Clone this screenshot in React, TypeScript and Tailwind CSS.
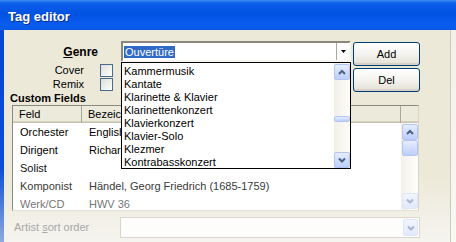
import React from "react";

interface ScrollBtnProps {
  chevron?: "up" | "down";
  faded?: boolean;
  className?: string;
}

const ScrollBtn: React.FC<ScrollBtnProps> = ({ chevron, faded, className = "" }) => (
  <div
    className={`flex items-center justify-center rounded-[2px] border ${
      faded
        ? "border-[#dfe6f6] bg-gradient-to-b from-[#f2f5fd] to-[#e2e9fb]"
        : "border-[#b4c6ef] bg-gradient-to-b from-[#e6edfe] to-[#bccefa]"
    } ${className}`}
  >
    {chevron && (
      <svg width="8" height="6" viewBox="0 0 8 6">
        <polyline
          points={chevron === "up" ? "1,5 4,2 7,5" : "1,1.5 4,4.5 7,1.5"}
          fill="none"
          stroke={faded ? "#a9b5cf" : "#4d6185"}
          strokeWidth="2"
        />
      </svg>
    )}
  </div>
);

const Checkbox: React.FC<{ className?: string }> = ({ className = "" }) => (
  <div
    className={`w-[13px] h-[13px] border border-[#4a6a8e] bg-gradient-to-br from-[#dcdcd7] to-white ${className}`}
  />
);

const XpButton: React.FC<{ label: string }> = ({ label }) => (
  <div className="w-[67px] h-[24px] rounded-[3px] border border-[#003c74] bg-gradient-to-b from-white via-[#f4f3ee] to-[#e3e0d5] shadow-[inset_0_-2px_0_#d8d2c6] flex items-center justify-center text-[11px] text-black">
    {label}
  </div>
);

const genres = [
  "Kammermusik",
  "Kantate",
  "Klarinette & Klavier",
  "Klarinettenkonzert",
  "Klavierkonzert",
  "Klavier-Solo",
  "Klezmer",
  "Kontrabasskonzert",
];

// the first two values run under the open genre list, so they are cut at its edge
const fields = [
  { name: "Orchester", value: "English Chamber Orchestra", color: "text-black", cut: true },
  { name: "Dirigent", value: "Richard Bonynge", color: "text-black", cut: true },
  { name: "Solist", value: "", color: "text-[#111]", cut: false },
  { name: "Komponist", value: "Händel, Georg Friedrich (1685-1759)", color: "text-[#3a3a3a]", cut: false },
  { name: "Werk/CD", value: "HWV 36", color: "text-[#767676]", cut: false },
];

const App: React.FC = () => {
  return (
    <div className="w-[456px] h-[242px] overflow-hidden flex flex-col bg-[#ece9d8] font-['Liberation_Sans',Arial,sans-serif] text-[11px] text-black">
      {/* title bar */}
      <div className="h-[30px] shrink-0 flex items-center pl-[8px] pt-[3px] bg-[linear-gradient(to_bottom,#3f8ef6_0px,#0d60ea_3px,#0053e2_45%,#0a5def_85%,#0a57e4_100%)]">
        <span className="text-[13px] font-bold text-white [text-shadow:1px_1px_0_#0b2f8f]">
          Tag editor
        </span>
      </div>

      <div className="flex flex-1 min-h-0">
        <div className="w-[4px] bg-[linear-gradient(to_bottom,#0646d2_0%,#0a4fd6_65%,#8fa9df_100%)]" />

        <div className="flex-1 flex flex-col bg-[linear-gradient(to_bottom,#ece9d8_0%,#ece9d8_68%,#f5f4ef_100%)]">
          {/* genre / flags / buttons */}
          <div className="mt-[11px] h-[50px] shrink-0 flex items-start">
            <div className="w-[117px] flex flex-col">
              <div className="h-[21px] flex items-center justify-end pr-[23px] text-[12px] font-bold">
                <span>
                  <span className="underline">G</span>enre
                </span>
              </div>
              <div className="mt-[2px] h-[13px] flex items-center justify-end pr-[8px]">
                <span>Cover</span>
                <Checkbox className="ml-[16px]" />
              </div>
              <div className="mt-[1px] h-[13px] flex items-center justify-end pr-[8px]">
                <span>Remix</span>
                <Checkbox className="ml-[16px]" />
              </div>
            </div>

            <div className="relative w-[230px] h-[21px] flex border-2 border-t-[#8a877c] border-l-[#8a877c] border-r-[#f7f6f1] border-b-[#f7f6f1] bg-white">
              <div className="flex-1 flex items-center pl-[1px]">
                <span className="bg-[#316ac5] text-white px-[1px] leading-[12px]">Ouvertüre</span>
              </div>
              <div className="w-[13px] border-l border-[#a9a7a0] flex items-center justify-center">
                <svg width="5" height="3" viewBox="0 0 5 3">
                  <polygon points="0,0 5,0 2.5,3" fill="#000" />
                </svg>
              </div>

              {/* open dropdown */}
              <div className="absolute left-[-2px] top-[19px] z-10 w-[230px] h-[107px] border border-black bg-white flex">
                <div className="flex-1 pt-[2px] pl-[2px] overflow-hidden">
                  {genres.map((g) => (
                    <div key={g} className="h-[13px] leading-[13px] whitespace-nowrap">
                      {g}
                    </div>
                  ))}
                </div>
                <div className="w-[16px] flex flex-col pt-[1px] bg-gradient-to-r from-[#f1efe7] to-[#fdfdfa]">
                  <ScrollBtn chevron="up" className="h-[16px]" />
                  <ScrollBtn className="mt-[36px] h-[6px]" />
                  <div className="flex-1" />
                  <ScrollBtn chevron="down" className="h-[16px]" />
                </div>
              </div>
            </div>

            <div className="ml-[2px] pt-[1px] flex flex-col gap-[2px]">
              <XpButton label="Add" />
              <XpButton label="Del" />
            </div>
          </div>

          {/* custom fields */}
          <div className="h-[14px] shrink-0 pl-[6px] flex items-center font-bold">Custom Fields</div>

          <div className="ml-[8px] w-[407px] h-[106px] shrink-0 flex flex-col overflow-hidden bg-white border border-t-[#8c8a80] border-l-[#8c8a80] border-r-[#d6d3c9] border-b-[#e2e0d8]">
            <div className="h-[17px] shrink-0 flex bg-[#ebeadb] shadow-[inset_0_-1px_0_#c7c3b3,inset_0_-2px_0_#d6d2c2]">
              <div className="w-[69px] pl-[6px] flex items-center border-r border-[#aca899]">Feld</div>
              <div className="w-[319px] flex items-center border-r border-[#aca899]">
                <div className="w-[39px] pl-[6px] whitespace-nowrap overflow-hidden">Bezeichnung</div>
              </div>
              <div className="flex-1" />
            </div>
            <div className="flex flex-1 min-h-0">
              <div className="flex-1 overflow-hidden">
                {fields.map((f) => (
                  <div key={f.name} className={`h-[18px] flex items-center whitespace-nowrap ${f.color}`}>
                    <div className="w-[69px] pl-[7px]">{f.name}</div>
                    <div className={f.cut ? "w-[39px] pl-[7px] overflow-hidden" : "pl-[7px]"}>{f.value}</div>
                  </div>
                ))}
              </div>
              <div className="w-[17px] flex flex-col pl-[1px] pt-[1px] pb-[1px] bg-gradient-to-r from-[#f3f1ea] to-[#fefefb]">
                <ScrollBtn chevron="up" className="h-[16px]" />
                <ScrollBtn className="h-[16px]" />
                <div className="flex-1" />
                <ScrollBtn chevron="down" faded className="h-[16px]" />
              </div>
            </div>
          </div>

          {/* artist sort order */}
          <div className="mt-[6px] h-[21px] shrink-0 flex items-center">
            <div className="w-[116px] pl-[10px] text-[#a8a8a8]">
              Artist <span className="underline">s</span>ort order
            </div>
            <div className="w-[300px] h-[21px] border border-[#d8d6cd] bg-[#fdfdfc] flex justify-end p-[1px]">
              <ScrollBtn chevron="down" faded className="w-[15px]" />
            </div>
          </div>
        </div>

        <div className="w-[6px] border-l border-[#cdc9bb] bg-gradient-to-b from-[#f2f0e8] to-[#f8f7f3]" />
      </div>
    </div>
  );
};

export default App;
